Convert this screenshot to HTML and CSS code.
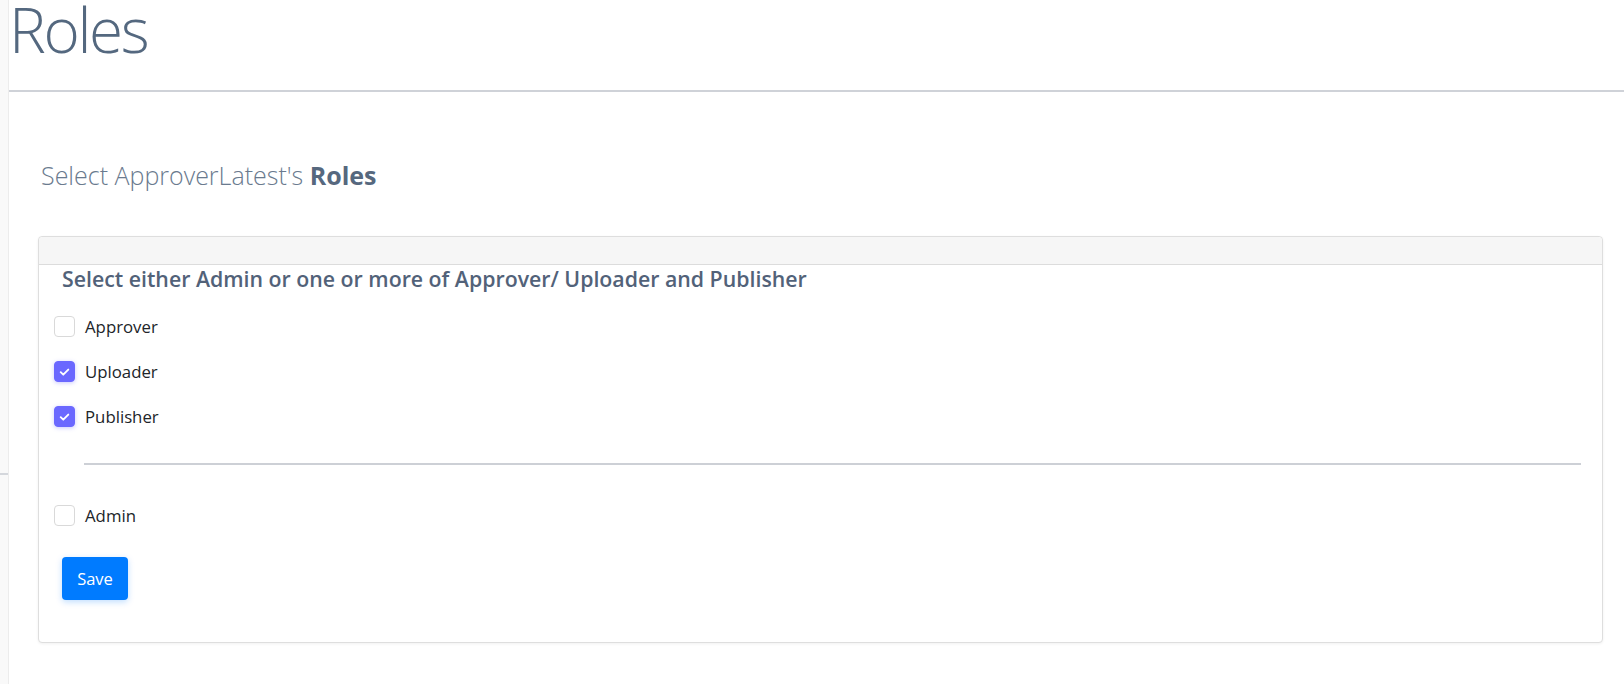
FILE: index.html
```html
<!DOCTYPE html>
<html lang="en">
<head>
<meta charset="utf-8">
<title>Roles</title>
<link rel="stylesheet" href="styles.css">
</head>
<body>
<div class="app">
  <aside class="rail"><span class="rail-mark"></span></aside>
  <main class="main">
    <h1 class="page-title">Roles</h1>
    <hr class="title-rule">
    <h2 class="subtitle">Select ApproverLatest's <strong>Roles</strong></h2>
    <section class="card">
      <div class="card-header"></div>
      <div class="card-body">
        <h3 class="hint">Select either Admin or one or more of Approver/ Uploader and Publisher</h3>
        <label class="check-row">
          <span class="box"></span>
          <span class="label">Approver</span>
        </label>
        <label class="check-row">
          <span class="box checked"><svg viewBox="0 0 20 20" width="20" height="20"><path d="M6 10.2l2.7 2.6 5.3-5.3" fill="none" stroke="#fff" stroke-width="2" stroke-linecap="round" stroke-linejoin="round"/></svg></span>
          <span class="label">Uploader</span>
        </label>
        <label class="check-row">
          <span class="box checked"><svg viewBox="0 0 20 20" width="20" height="20"><path d="M6 10.2l2.7 2.6 5.3-5.3" fill="none" stroke="#fff" stroke-width="2" stroke-linecap="round" stroke-linejoin="round"/></svg></span>
          <span class="label">Publisher</span>
        </label>
        <hr class="divider">
        <label class="check-row">
          <span class="box"></span>
          <span class="label">Admin</span>
        </label>
        <button class="btn-save" type="button">Save</button>
      </div>
    </section>
  </main>
</div>
</body>
</html>
```
FILE: styles.css
```css
html, body {
  margin: 0;
  padding: 0;
  background: #ffffff;
}
body {
  font-family: "Open Sans", "Noto Sans", sans-serif;
}
.app {
  display: flex;
  min-height: 684px;
}
.rail {
  width: 8px;
  flex: none;
  background: #f9f9f9;
  border-right: 1px solid #ececec;
  position: relative;
}
.rail-mark {
  position: absolute;
  left: 0;
  top: 473px;
  width: 8px;
  height: 2px;
  background: #d4d7dc;
}
.main {
  flex: 1;
  min-width: 0;
}
.page-title {
  margin: 0;
  padding: 0 0 0 0;
  font-size: 62px;
  font-weight: 300;
  line-height: 58px;
  color: #54687f;
  letter-spacing: -2.4px;
  height: 90px;
  box-sizing: border-box;
}
.title-rule {
  margin: 0;
  border: 0;
  border-top: 2px solid #cfd2d8;
}
.subtitle {
  margin: 67px 0 0 32px;
  font-size: 25px;
  font-weight: 300;
  line-height: 32px;
  color: #6a7a8e;
  letter-spacing: 0;
}
.subtitle strong {
  font-weight: 700;
  color: #56687e;
}
.card {
  margin: 45px 21px 0 29px;
  border: 1px solid #dedede;
  border-radius: 4px;
  box-shadow: 0 1px 3px rgba(0, 0, 0, 0.06);
  background: #fff;
}
.card-header {
  height: 27px;
  background: #f6f6f6;
  border-bottom: 1px solid #dcdcdc;
  border-radius: 4px 4px 0 0;
}
.card-body {
  padding: 0 21px 42px 15px;
}
.hint {
  margin: 0 0 11px 8px;
  font-size: 21.3px;
  font-weight: 600;
  line-height: 28px;
  color: #526279;
  letter-spacing: 0;
}
.check-row {
  display: flex;
  align-items: center;
  height: 45px;
}
.box {
  width: 19px;
  height: 19px;
  border: 1px solid #d9d9d9;
  border-radius: 4px;
  background: #fff;
  flex: none;
  display: flex;
  align-items: center;
  justify-content: center;
}
.box.checked {
  background: #6b68ff;
  border-color: #6b68ff;
  box-shadow: 0 1px 4px rgba(107, 104, 255, 0.35);
}
.box svg {
  display: block;
}
.label {
  margin-left: 10px;
  font-size: 16.8px;
  color: #212529;
  line-height: 22px;
}
.divider {
  margin: 24px 0 28px 30px;
  border: 0;
  border-top: 2px solid #cdd0d6;
}
.btn-save {
  margin: 19px 0 0 8px;
  display: block;
  width: 66px;
  height: 43px;
  border: 0;
  border-radius: 4px;
  background: #007bff;
  color: #fff;
  font-family: "Open Sans", "Noto Sans", sans-serif;
  font-size: 16.5px;
  box-shadow: 0 2px 6px rgba(0, 123, 255, 0.25);
  padding: 0;
}
```
